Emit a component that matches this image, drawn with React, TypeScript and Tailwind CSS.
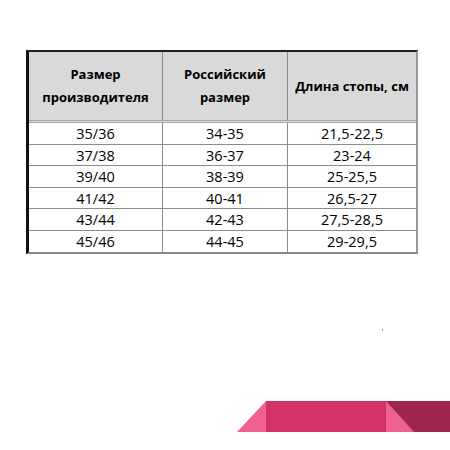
const rows = [
  ["35/36", "34-35", "21,5-22,5"],
  ["37/38", "36-37", "23-24"],
  ["39/40", "38-39", "25-25,5"],
  ["41/42", "40-41", "26,5-27"],
  ["43/44", "42-43", "27,5-28,5"],
  ["45/46", "44-45", "29-29,5"],
];

export default function App() {
  return (
    <div
      className="relative w-[450px] h-[450px] bg-white flex flex-col text-black"
      style={{ fontFamily: '"Open Sans", "Noto Sans", sans-serif' }}
    >
      <div className="ml-[26px] mt-[50px] w-[392px] border-l-[3px] border-t-[2px] border-l-[#111] border-t-[#222] border-r-2 border-r-[#9a9a9a] border-b-2 border-b-[#8a8a8a]">
        <div className="grid grid-cols-[134px_125px_1fr] bg-[#d9d9d9] h-[71px] border-b-[3px] border-double border-b-[#a6a6a6] text-[13px] font-bold leading-[23px] text-center">
          <div className="flex items-center justify-center border-r border-r-[#8c8c8c]">
            Размер
            <br />
            производителя
          </div>
          <div className="flex items-center justify-center border-r border-r-[#8c8c8c]">
            Российский
            <br />
            размер
          </div>
          <div className="flex items-center justify-center">Длина стопы, см</div>
        </div>
        {rows.map((r, i) => (
          <div
            key={i}
            className={
              "grid grid-cols-[134px_125px_1fr] h-[21.5px] text-[14.5px] leading-[21px] text-center " +
              (i < rows.length - 1 ? "border-b border-b-[#8c8c8c]" : "")
            }
          >
            <div className="border-r border-r-[#8c8c8c]">{r[0]}</div>
            <div className="border-r border-r-[#8c8c8c]">{r[1]}</div>
            <div>{r[2]}</div>
          </div>
        ))}
      </div>

      <span className="absolute left-[382px] top-[329px] w-px h-[2px] bg-[#9a9a9a]" />

      <svg
        className="ml-[237px] mt-[147px]"
        width="213"
        height="31"
        viewBox="0 0 213 31"
      >
        <polygon points="0,31 29,0 29,31" fill="#ef6192" />
        <rect x="29" y="0" width="120" height="31" fill="#d2346a" />
        <rect x="149" y="0" width="64" height="31" fill="#9e254e" />
        <polygon points="149,0 149,31 177,31" fill="#ef6192" />
      </svg>
    </div>
  );
}
